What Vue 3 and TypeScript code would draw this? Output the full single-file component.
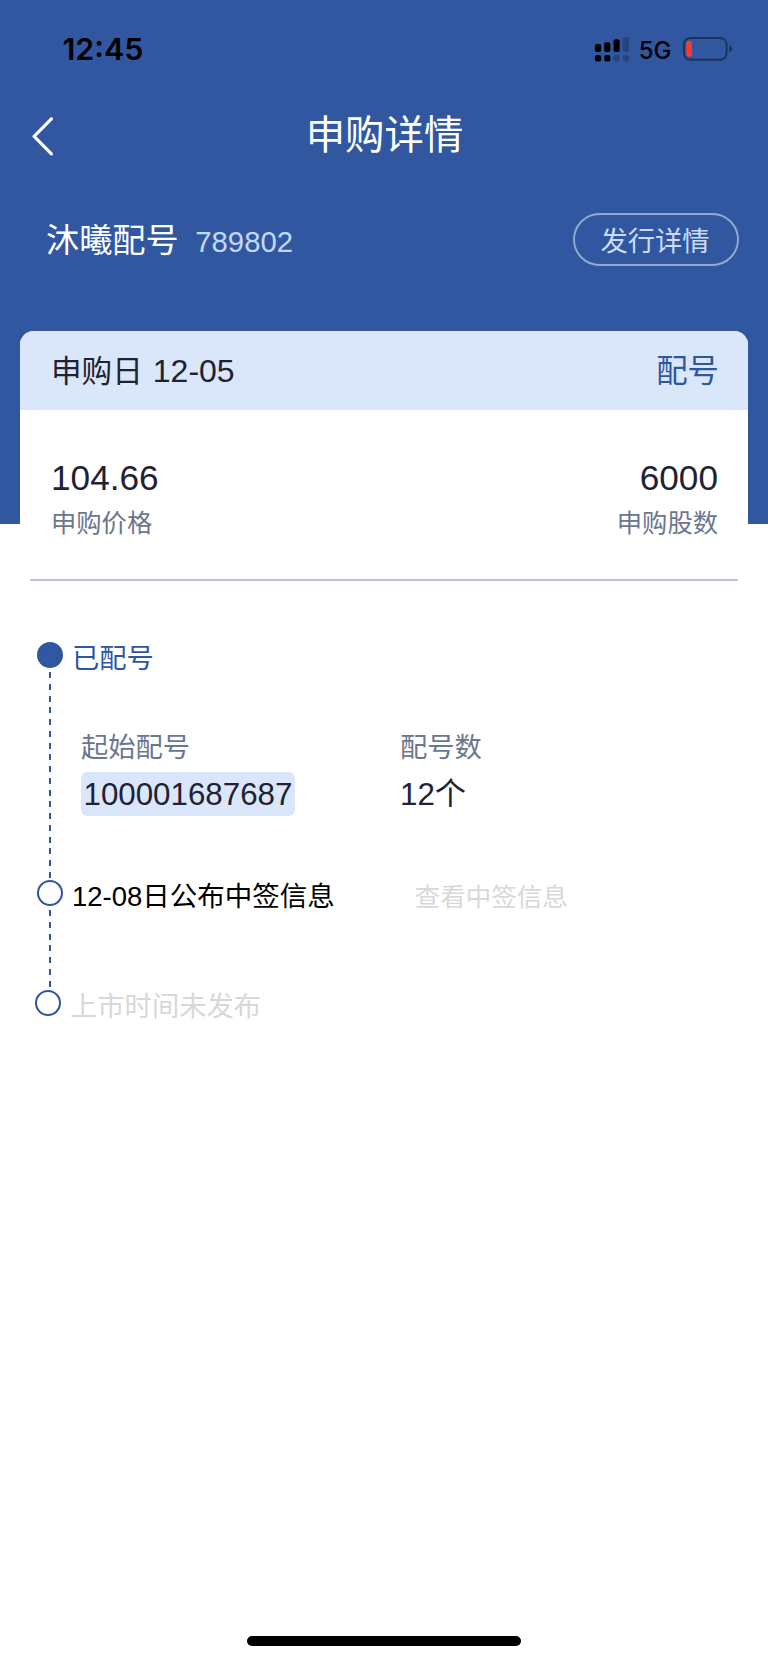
<script setup lang="ts">
interface Figure {
  value: string
  label: string
}

interface SignalBar {
  x: number
  y: number
  height: number
  active: boolean
}

const figures: Figure[] = [
  { value: '104.66', label: '申购价格' },
  { value: '6000', label: '申购股数' },
]

const signalBars: SignalBar[] = [
  { x: 0, y: 7, height: 8, active: true },
  { x: 9.2, y: 5.3, height: 9.7, active: true },
  { x: 18.5, y: 2.3, height: 12.7, active: true },
  { x: 27.8, y: 0, height: 15, active: false },
  { x: 0, y: 18, height: 6.5, active: true },
  { x: 9.2, y: 18, height: 6.5, active: true },
  { x: 18.5, y: 18, height: 6.5, active: false },
  { x: 27.8, y: 18, height: 6.5, active: false },
]
</script>

<template>
  <div class="screen">
    <div class="status">
      <span class="clock">12:45</span>
      <div class="indicators">
        <svg class="signal" width="34" height="25" viewBox="0 0 34 25">
          <rect
            v-for="(bar, i) in signalBars"
            :key="i"
            :x="bar.x"
            :y="bar.y"
            width="6.2"
            :height="bar.height"
            rx="2"
            :fill-opacity="bar.active ? 1 : 0.22"
          />
        </svg>
        <span class="network">5G</span>
        <svg class="battery" width="50" height="24" viewBox="0 0 50 24">
          <rect x="1" y="1" width="42.6" height="21.8" rx="6.5" fill="none" stroke="#000" stroke-opacity="0.42" stroke-width="1.9" />
          <path d="M46.3 8.6c3.7 1.4 3.7 5.3 0 6.7z" fill="#000" fill-opacity="0.45" />
          <rect x="3.4" y="3.8" width="5.4" height="16" rx="2.4" fill="#ff3b30" />
        </svg>
      </div>
    </div>

    <header class="nav">
      <svg class="back" width="24" height="42" viewBox="0 0 24 42">
        <path d="M20.4 2.8 3.1 20.3l17.3 17.5" fill="none" stroke="#fff" stroke-width="3.2" stroke-linecap="round" stroke-linejoin="round" />
      </svg>
      <h1 class="title">申购详情</h1>
    </header>

    <section class="stock">
      <div class="stock-id">
        <span class="stock-name">沐曦配号</span>
        <span class="stock-code">789802</span>
      </div>
      <button class="detail-btn" type="button">发行详情</button>
    </section>

    <main class="card">
      <div class="card-head">
        <div class="head-day"><span class="head-label">申购日</span><span>12-05</span></div>
        <span class="state">配号</span>
      </div>

      <div class="figures">
        <div v-for="item in figures" :key="item.label" class="figure">
          <div class="figure-value">{{ item.value }}</div>
          <div class="figure-label">{{ item.label }}</div>
        </div>
      </div>

      <div class="timeline">
        <div class="step step-done">
          <div class="rail">
            <i class="node node-filled"></i>
            <i class="dash"></i>
          </div>
          <div class="step-body">
            <div class="step-title active">已配号</div>
            <div class="allotment">
              <div class="allot-col">
                <div class="allot-label">起始配号</div>
                <div class="allot-value number">100001687687</div>
              </div>
              <div class="allot-col">
                <div class="allot-label">配号数</div>
                <div class="allot-value">12个</div>
              </div>
            </div>
          </div>
        </div>

        <div class="step step-next">
          <div class="rail">
            <i class="node"></i>
            <i class="dash"></i>
          </div>
          <div class="step-body step-row">
            <div class="step-title dated">12-08日公布中签信息</div>
            <div class="step-link">查看中签信息</div>
          </div>
        </div>

        <div class="step step-last">
          <div class="rail">
            <i class="node"></i>
          </div>
          <div class="step-body">
            <div class="step-title muted">上市时间未发布</div>
          </div>
        </div>
      </div>
    </main>

    <div class="home-bar"></div>
  </div>
</template>

<style>
html,
body {
  margin: 0;
  background: #fff;
}
</style>

<style scoped>
.screen {
  display: flex;
  flex-direction: column;
  box-sizing: border-box;
  width: 768px;
  height: 1663px;
  padding-bottom: 17px;
  overflow: hidden;
  background: linear-gradient(#30579f 524px, #fff 524px);
  color: #1e2233;
  font-family: 'Liberation Sans', 'Noto Sans CJK SC', sans-serif;
  font-weight: 400;
  white-space: nowrap;
}

.status {
  display: flex;
  justify-content: space-between;
  height: 99px;
  padding: 0 35.5px 0 62.5px;
  color: #000;
  font-family: Inter, sans-serif;
  line-height: 99px;
}

.clock {
  font-size: 30.4px;
  font-weight: 600;
}

.indicators {
  display: flex;
  align-items: center;
  height: 98px;
}

.network {
  margin: 3px 11px 0 11px;
  font-size: 24px;
  font-weight: 500;
}

.signal {
  margin-right: -0.8px;
}

.nav {
  display: grid;
  grid-template-columns: 31px 24px 1fr 54px;
  align-items: center;
  height: 75px;
}

.back {
  grid-column: 2;
}

.title {
  margin: 0;
  font-size: 39.4px;
  font-weight: 400;
  line-height: 72px;
  padding-bottom: 4px;
  color: #fff;
  text-align: center;
}

.stock {
  display: flex;
  align-items: center;
  justify-content: space-between;
  height: 157px;
  box-sizing: border-box;
  padding: 0 29.5px 27px 46px;
}

.stock-id {
  display: flex;
  align-items: baseline;
  gap: 16.5px;
  padding-top: 5px;
  line-height: 40px;
}

.stock-name {
  font-size: 33.2px;
  color: #fff;
}

.stock-code {
  font-size: 29.3px;
  color: #c3d7f8;
}

.detail-btn {
  box-sizing: border-box;
  width: 166px;
  height: 53px;
  padding: 3px 1px 0 0;
  border: 2px solid #93a8d0;
  border-radius: 27px;
  background: transparent;
  color: #cbdcf8;
  font: inherit;
  font-size: 27.3px;
  line-height: 47px;
}

.card {
  flex: 1;
  margin: 0 20px;
  border-radius: 14px 14px 0 0;
  background: #fff;
  overflow: hidden;
}

.card-head {
  display: flex;
  justify-content: space-between;
  height: 78.6px;
  padding: 0 29px 0 31px;
  background: #dae6f9;
  font-size: 32px;
  line-height: 81px;
}

.head-day {
  display: flex;
  gap: 10px;
}

.head-label {
  font-size: 30.6px;
  line-height: 81px;
}

.state {
  color: #2f56a0;
  font-size: 31.4px;
  line-height: 81px;
}

.figures {
  display: flex;
  justify-content: space-between;
  height: 171.4px;
  box-sizing: border-box;
  margin: 0 10px;
  padding: 45.4px 20px 0 21px;
  border-bottom: 2px solid #bcc1d1;
}

.figure:last-child {
  text-align: right;
}

.figure-value {
  font-size: 35.2px;
  line-height: 46px;
}

.figure-label {
  font-size: 25.3px;
  line-height: 45px;
  color: #6b768f;
}

.timeline {
  padding: 61px 0 0 15.4px;
}

.step {
  display: flex;
  gap: 9px;
}

.step-done {
  height: 238px;
}

.step-next {
  height: 110px;
}

.step-last {
  margin-left: -2px;
}

.rail {
  display: flex;
  flex-direction: column;
  align-items: center;
  width: 30px;
}

.node {
  box-sizing: border-box;
  flex: none;
  width: 26px;
  height: 26px;
  border: 2px solid #2f56a0;
  border-radius: 50%;
}

.node-filled {
  background: #30579f;
}

.dash {
  flex: 1;
  width: 2px;
  margin-top: 4px;
  background: repeating-linear-gradient(#2f56a0 0 6px, transparent 6px 11.75px);
}

.step-body {
  flex: 1;
}

.step-title {
  margin-left: -2.4px;
  font-size: 27.3px;
  line-height: 34px;
  color: #000;
}

.step-title.dated {
  font-size: 27.5px;
}

.step-title.active {
  color: #2f56a0;
}

.step-title.muted {
  color: #d8d8d8;
}

.step-row {
  display: flex;
  align-items: flex-start;
}

.step-link {
  margin-left: 80px;
  font-size: 25.5px;
  line-height: 35px;
  color: #d8d8d8;
}

.allotment {
  display: grid;
  grid-template-columns: 319px 1fr;
  padding: 53px 0 0 6.6px;
}

.allot-label {
  font-size: 27.3px;
  line-height: 38px;
  color: #6b768f;
}

.allot-value {
  width: fit-content;
  margin-top: 5px;
  font-size: 31.3px;
  line-height: 45px;
}

.number {
  height: 44px;
  padding: 0 2.5px;
  border-radius: 6px;
  background: #dae6f9;
}

.home-bar {
  align-self: center;
  width: 274px;
  height: 10px;
  border-radius: 5px;
  background: #000;
}
</style>
